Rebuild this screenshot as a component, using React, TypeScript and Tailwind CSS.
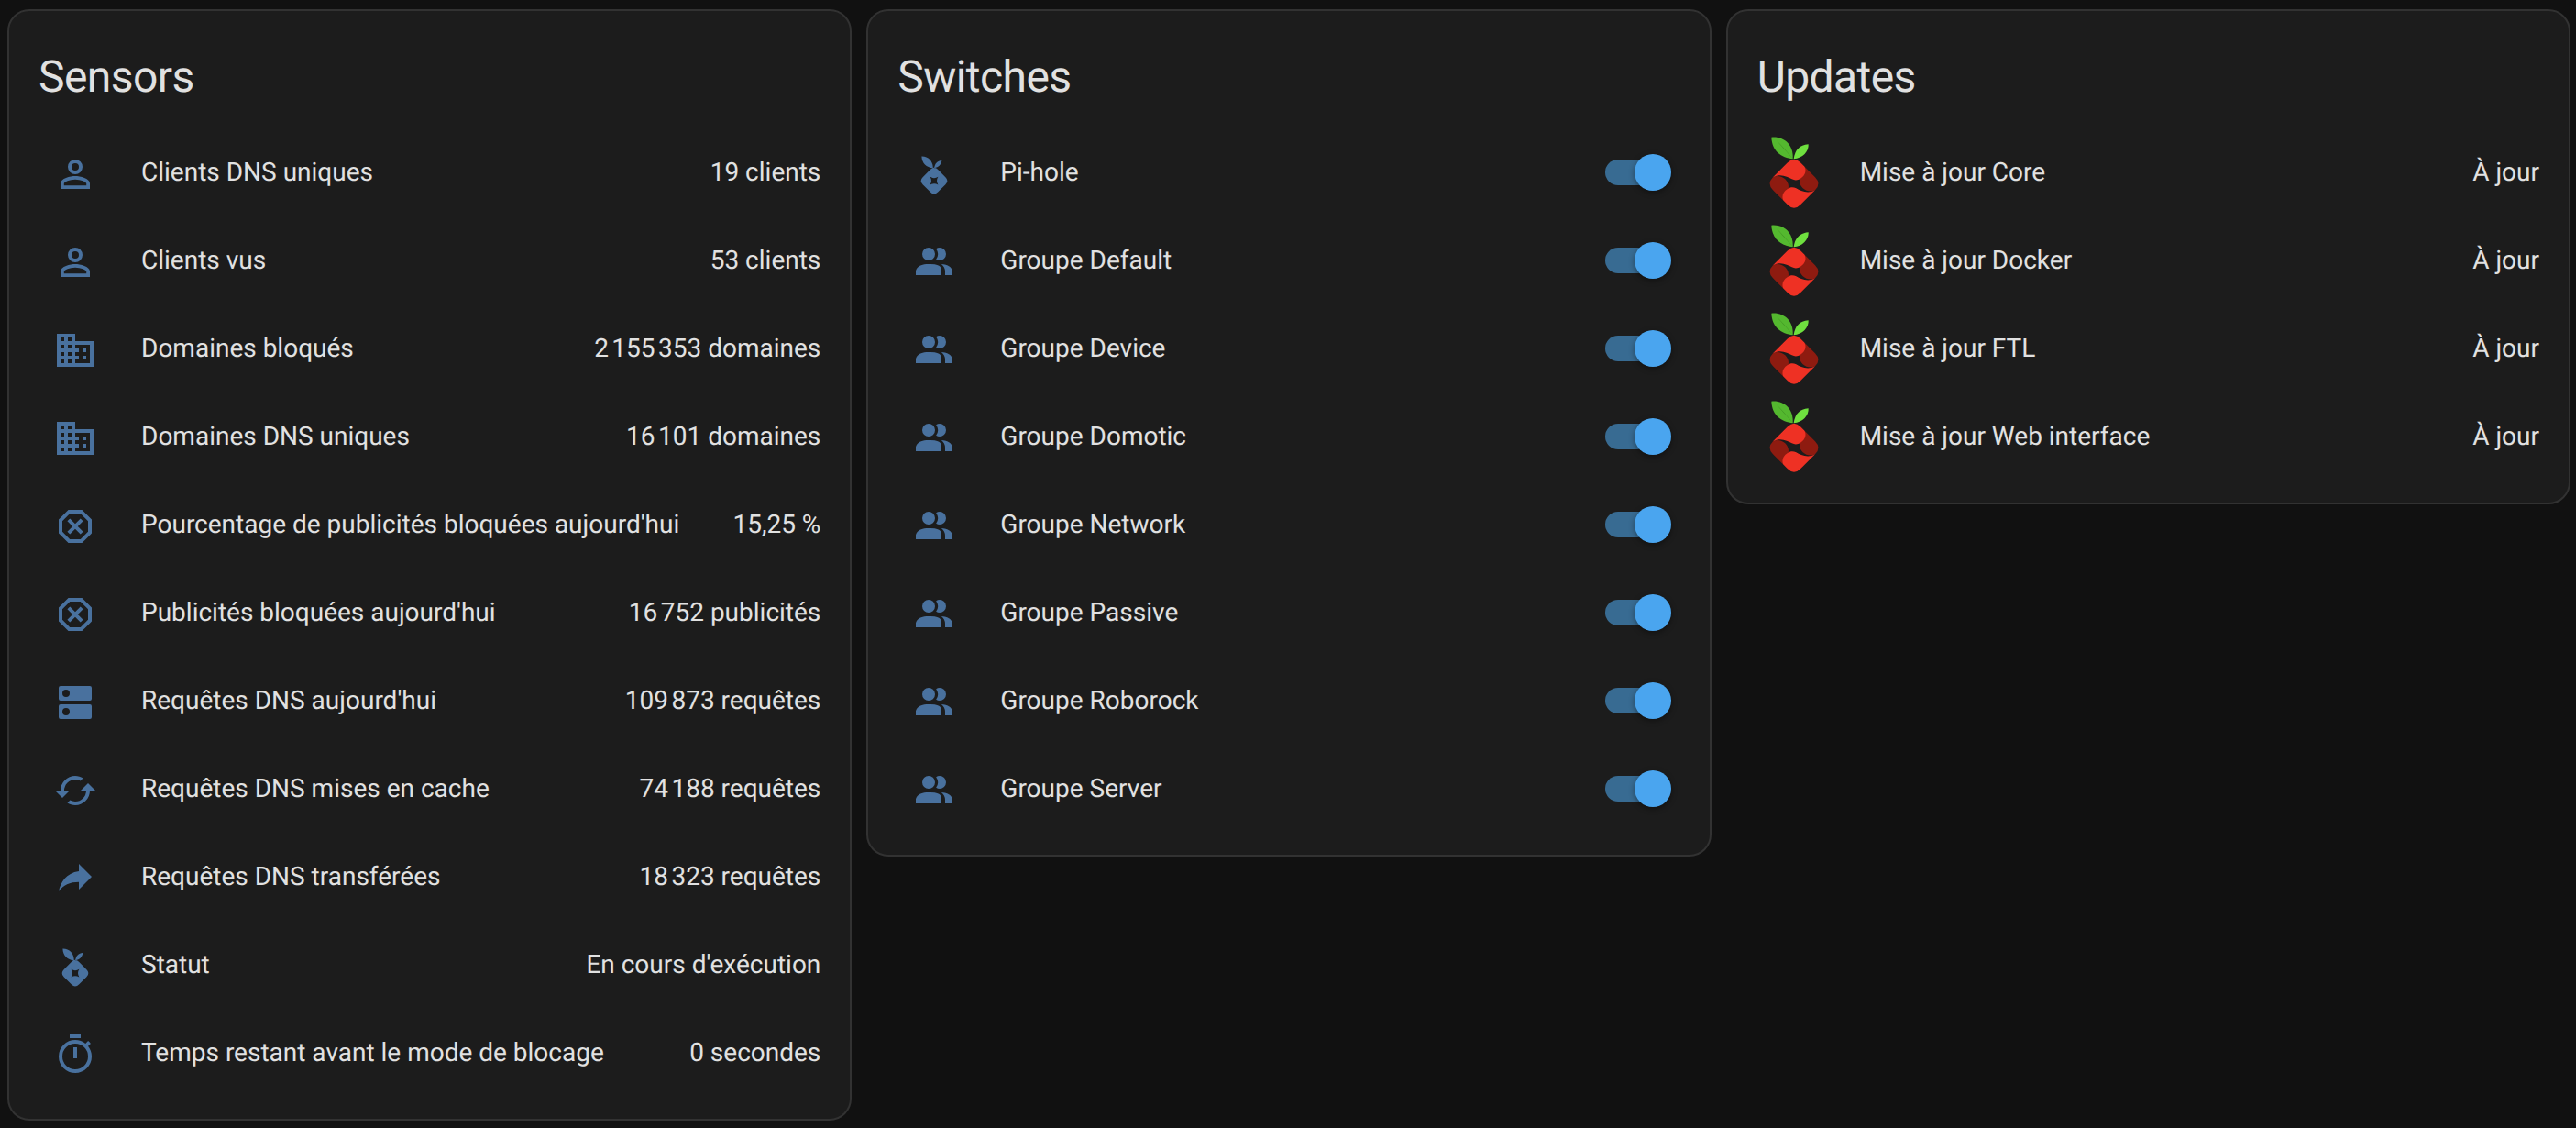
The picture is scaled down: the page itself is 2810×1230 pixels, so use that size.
const ACCOUNT = 'M12,4A4,4 0 0,1 16,8A4,4 0 0,1 12,12A4,4 0 0,1 8,8A4,4 0 0,1 12,4M12,6A2,2 0 0,0 10,8A2,2 0 0,0 12,10A2,2 0 0,0 14,8A2,2 0 0,0 12,6M12,13C14.67,13 20,14.33 20,17V20H4V17C4,14.33 9.33,13 12,13M12,14.9C9.03,14.9 5.9,16.36 5.9,17V18.1H18.1V17C18.1,16.36 14.97,14.9 12,14.9Z';
const DOMAIN = 'M18,15H16V17H18M18,11H16V13H18M20,19H12V17H14V15H12V13H14V11H12V9H20M10,7H8V5H10M10,11H8V9H10M10,15H8V13H10M10,19H8V17H10M6,7H4V5H6M6,11H4V9H6M6,15H4V13H6M6,19H4V17H6M12,7V3H2V21H22V7H12Z';
const OCTAGON = 'M8.27,3L3,8.27V15.73L8.27,21H15.73C17.5,19.24 21,15.73 21,15.73V8.27L15.73,3M9.1,5H14.9L19,9.1V14.9L14.9,19H9.1L5,14.9V9.1M9.12,7.71L7.71,9.12L10.59,12L7.71,14.88L9.12,16.29L12,13.41L14.88,16.29L16.29,14.88L13.41,12L16.29,9.12L14.88,7.71L12,10.59';
const DNS = 'M7,9A2,2 0 0,1 5,7A2,2 0 0,1 7,5A2,2 0 0,1 9,7A2,2 0 0,1 7,9M20,3H4A1,1 0 0,0 3,4V10A1,1 0 0,0 4,11H20A1,1 0 0,0 21,10V4A1,1 0 0,0 20,3M7,19A2,2 0 0,1 5,17A2,2 0 0,1 7,15A2,2 0 0,1 9,17A2,2 0 0,1 7,19M20,13H4A1,1 0 0,0 3,14V20A1,1 0 0,0 4,21H20A1,1 0 0,0 21,20V14A1,1 0 0,0 20,13Z';
const CACHED = 'M19,8L15,12H18A6,6 0 0,1 12,18C11,18 10.03,17.75 9.2,17.3L7.74,18.76C8.97,19.54 10.43,20 12,20A8,8 0 0,0 20,12H23M6,12A6,6 0 0,1 12,6C13,6 13.97,6.25 14.8,6.7L16.26,5.24C15.03,4.46 13.57,4 12,4A8,8 0 0,0 4,12H1L5,16L9,12';
const SHARE = 'M21,11L14,4V8C7,9 4,14 3,19C5.5,15.5 9,13.9 14,13.9V18L21,11Z';
const TIMER = 'M12,20A7,7 0 0,1 5,13A7,7 0 0,1 12,6A7,7 0 0,1 19,13A7,7 0 0,1 12,20M19.03,7.39L20.45,5.97C20,5.46 19.55,5 19.04,4.56L17.62,6C16.07,4.74 14.12,4 12,4A9,9 0 0,0 3,13A9,9 0 0,0 12,22C17,22 21,17.97 21,13C21,10.88 20.26,8.93 19.03,7.39M11,14H13V8H11M15,1H9V3H15V1Z';
const GROUP = 'M16 17V19H2V17S2 13 9 13 16 15 16 17M12.5 7.5A3.5 3.5 0 1 0 9 11A3.5 3.5 0 0 0 12.5 7.5M15.94 13A5.32 5.32 0 0 1 18 17V19H22V17S22 13.37 15.94 13M15 4A3.39 3.39 0 0 0 13.07 4.59A5 5 0 0 1 13.07 10.41A3.39 3.39 0 0 0 15 11A3.5 3.5 0 0 0 15 4Z';
// hand drawn, mdi's pi-hole glyph: leaves + rounded diamond with a star hole
const PIHOLE =
  'M5.2 2.2C8.8 2.1 11.3 4.6 11.4 8.6C7.8 8.3 5.3 6 5.2 2.2Z M16.2 4.4C16 6.6 14.4 8.3 12.1 8.6C12.4 6.2 13.7 4.8 16.2 4.4Z ' +
  'M10 9.4Q12 7.4 14 9.4L18.2 13.6Q20.2 15.6 18.2 17.6L14 21.8Q12 23.8 10 21.8L5.8 17.6Q3.8 15.6 5.8 13.6Z ' +
  'M9.8 13.4Q12 14.8 14.2 13.4Q12.8 15.6 14.2 17.8Q12 16.4 9.8 17.8Q11.2 15.6 9.8 13.4Z';

const SENSORS = [
  { icon: ACCOUNT, name: 'Clients DNS uniques', value: '19 clients' },
  { icon: ACCOUNT, name: 'Clients vus', value: '53 clients' },
  { icon: DOMAIN, name: 'Domaines bloqués', value: '2\u202f155\u202f353 domaines' },
  { icon: DOMAIN, name: 'Domaines DNS uniques', value: '16\u202f101 domaines' },
  { icon: OCTAGON, name: "Pourcentage de publicités bloquées aujourd'hui", value: '15,25 %' },
  { icon: OCTAGON, name: "Publicités bloquées aujourd'hui", value: '16\u202f752 publicités' },
  { icon: DNS, name: "Requêtes DNS aujourd'hui", value: '109\u202f873 requêtes' },
  { icon: CACHED, name: 'Requêtes DNS mises en cache', value: '74\u202f188 requêtes' },
  { icon: SHARE, name: 'Requêtes DNS transférées', value: '18\u202f323 requêtes' },
  { icon: PIHOLE, name: 'Statut', value: "En cours d'exécution" },
  { icon: TIMER, name: 'Temps restant avant le mode de blocage', value: '0 secondes' },
];

const SWITCHES = [
  { icon: PIHOLE, name: 'Pi-hole' },
  { icon: GROUP, name: 'Groupe Default' },
  { icon: GROUP, name: 'Groupe Device' },
  { icon: GROUP, name: 'Groupe Domotic' },
  { icon: GROUP, name: 'Groupe Network' },
  { icon: GROUP, name: 'Groupe Passive' },
  { icon: GROUP, name: 'Groupe Roborock' },
  { icon: GROUP, name: 'Groupe Server' },
];

const UPDATES = ['Mise à jour Core', 'Mise à jour Docker', 'Mise à jour FTL', 'Mise à jour Web interface'];

function RowIcon({ d }: { d: string }) {
  return (
    <div className="flex h-20 w-20 shrink-0 items-center justify-center">
      <svg viewBox="0 0 24 24" className="mt-1 h-12 w-12 fill-[#49719e]" fillRule="evenodd">
        <path d={d} />
      </svg>
    </div>
  );
}

// full colour logo, coordinates are 3x the screenshot
function PiHoleLogo() {
  const lobe = 'M168 220L216 172Q237 151 258 172L270 184C279 196 275 214 258 224C250 230 240 231 230 226C216 218 192 206 168 220Z';
  const side = 'M168 220Q147 241 168 262L204 298C207 284 219 268 219 250C219 226 190 208 168 220Z';
  return (
    <div className="h-20 w-20 shrink-0">
      <svg viewBox="117 84 240 240" className="h-20 w-20">
        <path d="M163 89C205 85 236 115 233 160C195 155 165 135 163 89Z" fill="#54b82f" />
        <path d="M180 100C200 120 218 140 233 160C212 135 195 118 180 100Z" fill="#3f8f24" />
        <path d="M284 112C286 135 265 158 236 160C240 130 255 115 284 112Z" fill="#6fe03f" />
        <g fill="#8e1b10">
          <path d={side} />
          <path d={side} transform="rotate(180 237 241)" />
        </g>
        <g fill="#ee3124">
          <path d={lobe} />
          <path d={lobe} transform="rotate(180 237 241)" />
        </g>
      </svg>
    </div>
  );
}

function Toggle() {
  return (
    <div className="relative mr-[14px] h-7 w-[68px] shrink-0 rounded-full bg-[#386b92]">
      <div className="absolute -right-1 -top-1.5 h-10 w-10 rounded-full bg-[#4aa5ef] shadow-[0_2px_6px_rgba(0,0,0,0.4)]" />
    </div>
  );
}

function Card({ title, children }: { title: string; children: React.ReactNode }) {
  return (
    <div className="rounded-3xl border-2 border-[#323232] bg-[#1c1c1c] px-8 pb-8">
      <h2 className="pb-6 pt-8 text-[48px] font-normal leading-[80px] tracking-[-0.012em] text-[#e1e1e1]">{title}</h2>
      <div className="flex flex-col gap-4">{children}</div>
    </div>
  );
}

export default function App() {
  return (
    <div className="min-h-screen bg-[#111111] font-['Roboto',sans-serif] text-[28px] text-[#e1e1e1] [text-rendering:geometricPrecision]">
      <div className="grid grid-cols-3 items-start gap-4 pl-2 pr-1.5 pt-2.5">
        <Card title="Sensors">
          {SENSORS.map((s) => (
            <div key={s.name} className="flex h-20 items-center">
              <RowIcon d={s.icon} />
              <div className="ml-8">{s.name}</div>
              <div className="ml-auto">{s.value}</div>
            </div>
          ))}
        </Card>
        <Card title="Switches">
          {SWITCHES.map((s) => (
            <div key={s.name} className="flex h-20 items-center">
              <RowIcon d={s.icon} />
              <div className="ml-8">{s.name}</div>
              <div className="ml-auto">
                <Toggle />
              </div>
            </div>
          ))}
        </Card>
        <Card title="Updates">
          {UPDATES.map((name) => (
            <div key={name} className="flex h-20 items-center">
              <PiHoleLogo />
              <div className="ml-8">{name}</div>
              <div className="ml-auto">À jour</div>
            </div>
          ))}
        </Card>
      </div>
    </div>
  );
}
